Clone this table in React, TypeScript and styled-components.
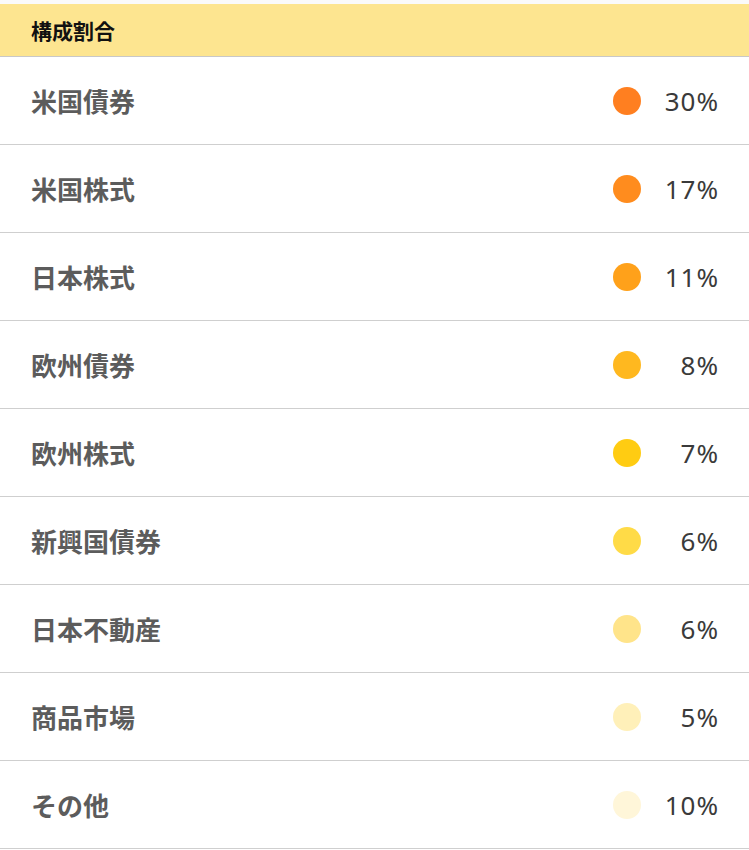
import React from 'react'
import styled, { createGlobalStyle } from 'styled-components'

const GlobalStyle = createGlobalStyle`
  html, body {
    margin: 0;
    padding: 0;
    background: #ffffff;
  }
  body {
    font-family: "Noto Sans CJK JP", "Noto Sans", sans-serif;
  }
`

const Page = styled.div`
  width: 749px;
  padding-top: 4px;
  background: #fafafa;
`

const Header = styled.div`
  height: 52px;
  display: flex;
  align-items: center;
  padding: 0 31px;
  background: #fde590;
  border-bottom: 1px solid #c8c8c8;
  font-size: 21px;
  font-weight: 700;
  color: #111;
`

const List = styled.ul`
  list-style: none;
  margin: 0;
  padding: 0;
  background: #fff;
`

const Row = styled.li`
  height: 87px;
  display: flex;
  align-items: center;
  padding: 0 30px 0 31px;
  border-bottom: 1px solid #cfcfcf;
`

const Label = styled.span`
  flex: 1;
  font-size: 26px;
  line-height: 1;
  font-weight: 700;
  color: #5c5c5c;
`

const Dot = styled.span<{ $color: string }>`
  width: 28px;
  height: 28px;
  border-radius: 50%;
  background: ${(p) => p.$color};
  flex: none;
`

const Percent = styled.span`
  width: 78px;
  text-align: right;
  font-family: "Noto Sans", sans-serif;
  font-size: 26px;
  line-height: 1;
  letter-spacing: 1px;
  color: #3a3a3a;
`

const items = [
  { label: '米国債券', value: '30%', color: '#ff7f20' },
  { label: '米国株式', value: '17%', color: '#ff8c1e' },
  { label: '日本株式', value: '11%', color: '#ffa11a' },
  { label: '欧州債券', value: '8%', color: '#ffb81f' },
  { label: '欧州株式', value: '7%', color: '#ffcc12' },
  { label: '新興国債券', value: '6%', color: '#ffdb47' },
  { label: '日本不動産', value: '6%', color: '#ffe48a' },
  { label: '商品市場', value: '5%', color: '#fff0b9' },
  { label: 'その他', value: '10%', color: '#fff6d9' },
]

function App() {
  return (
    <Page>
      <GlobalStyle />
      <Header>構成割合</Header>
      <List>
        {items.map((item) => (
          <Row key={item.label}>
            <Label>{item.label}</Label>
            <Dot $color={item.color} />
            <Percent>{item.value}</Percent>
          </Row>
        ))}
      </List>
    </Page>
  )
}

export default App
